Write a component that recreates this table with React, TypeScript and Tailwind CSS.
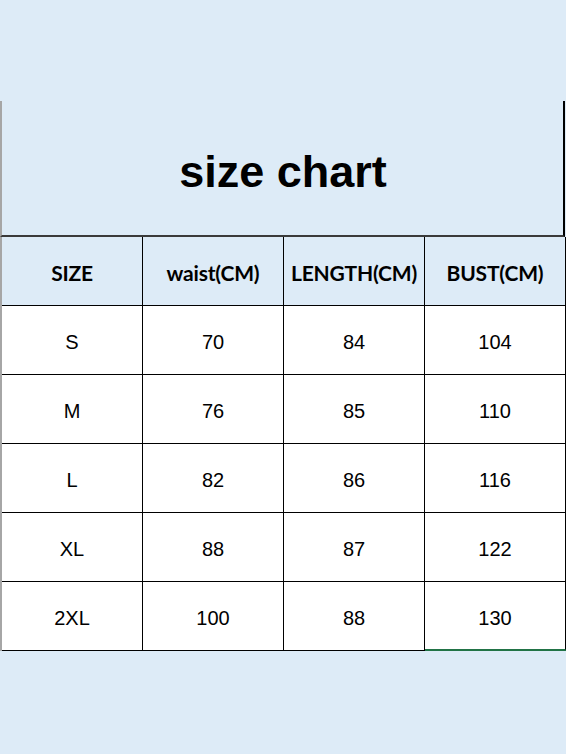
import React from "react";

const rows = [
  ["S", "70", "84", "104"],
  ["M", "76", "85", "110"],
  ["L", "82", "86", "116"],
  ["XL", "88", "87", "122"],
  ["2XL", "100", "88", "130"],
];

const headers = ["SIZE", "waist(CM)", "LENGTH(CM)", "BUST(CM)"];

export default function App() {
  return (
    <div className="w-[566px] h-[754px] bg-[#ddebf7] pt-[101px] font-['Liberation_Sans',Arial,sans-serif] text-black">
      <div className="w-[565px]">
        {/* Title */}
        <div className="h-[136px] flex items-center justify-center border-l-2 border-l-[#a6a6a6] border-r-2 border-r-black border-b-2 border-b-[#3a3a3a]">
          <h1 className="text-[45px] font-bold leading-none pl-[1px] pt-[6px]">size chart</h1>
        </div>

        {/* Header */}
        <div className="grid grid-cols-[141px_141px_141px_142px] h-[69px] border-l-2 border-l-[#a6a6a6]">
          {headers.map((h, i) => (
            <div
              key={h}
              className={`flex items-center justify-center pt-[3px] border-black border-b ${i < 3 ? "border-r" : "border-r-2"} font-['Lato',sans-serif] font-bold text-[21px] tracking-[-0.2px]`}
            >
              {h}
            </div>
          ))}
        </div>

        {/* Data rows */}
        {rows.map((r, ri) => (
          <div key={r[0]} className="grid grid-cols-[141px_141px_141px_142px] h-[69px] bg-white border-l-2 border-l-[#a6a6a6]">
            {r.map((v, i) => (
              <div
                key={i}
                className={`flex items-center justify-center pt-[4px] text-[20px] ${i < 3 ? "border-r border-black" : "border-r-2 border-black"} ${
                  ri === rows.length - 1 && i === 3 ? "border-b-2 border-b-[#217346]" : "border-b border-b-black"
                }`}
              >
                {v}
              </div>
            ))}
          </div>
        ))}
      </div>
    </div>
  );
}
